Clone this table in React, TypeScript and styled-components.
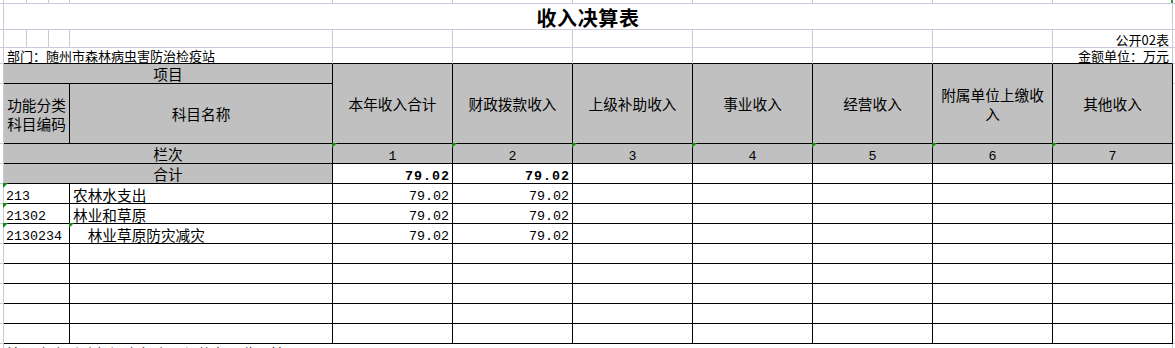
import React from "react";
import styled, { createGlobalStyle, css } from "styled-components";

const GRID = "#c9cad9";
const INK = "#000000";
const HEAD = "#c0c0c0";
const MARK = "#128a12";
const CJK = `"Noto Sans CJK SC", "Noto Sans", sans-serif`;
const MONO = `"Liberation Mono", "Noto Sans CJK SC", monospace`;

const GlobalStyle = createGlobalStyle`
  html, body { margin: 0; padding: 0; overflow: hidden; background: #ffffff; }
  body { font-family: ${CJK}; color: #000000; }
  * { box-sizing: border-box; }
`;

type Place = { $c: string; $r: string };

const Sheet = styled.div`
  display: grid;
  grid-template-columns: 4px 23px 22px 21px 263px repeat(7, 120px) 2px;
  grid-template-rows: 4px 26px 18px 16px 20px 60px repeat(10, 20px) 20px;
  width: 1175px;
  height: 348px;
  overflow: hidden;
`;

const markCss = css`
  &::before {
    content: "";
    position: absolute;
    top: -1px;
    left: -1px;
    width: 0;
    height: 0;
    border-top: 5px solid ${MARK};
    border-right: 5px solid transparent;
    z-index: 1;
  }
`;

const Base = styled.div<Place>`
  position: relative;
  grid-column: ${(p) => p.$c};
  grid-row: ${(p) => p.$r};
  display: flex;
  min-width: 0;
  white-space: nowrap;
`;

const GridCell = styled(Base)<{ $inkBottom?: boolean; $open?: boolean }>`
  border-right: ${(p) => (p.$open ? "none" : `1px solid ${GRID}`)};
  border-bottom: 1px solid ${(p) => (p.$inkBottom ? INK : GRID)};
`;

const FillHandle = styled.span`
  position: absolute;
  top: 0;
  right: -1px;
  width: 2px;
  height: 3px;
  background: #1f9d3a;
`;

const TitleCell = styled(Base)`
  border-right: 1px solid ${GRID};
  border-bottom: 1px solid ${GRID};
  justify-content: center;
  align-items: flex-end;
  font-size: 20px;
  font-weight: 700;
  line-height: 23px;
  letter-spacing: 0.6px;
`;

const InfoCell = styled(Base)<{ $right?: boolean; $inkBottom?: boolean }>`
  border-right: 1px solid ${GRID};
  border-bottom: 1px solid ${(p) => (p.$inkBottom ? INK : GRID)};
  justify-content: ${(p) => (p.$right ? "flex-end" : "flex-start")};
  align-items: flex-end;
  padding: 0 3px;
  font-size: 13px;
  line-height: 15px;
`;

const HeadCell = styled(Base)<{ $wrap?: boolean; $mark?: boolean; $mono?: boolean }>`
  background: ${HEAD};
  border-right: 1px solid ${INK};
  border-bottom: 1px solid ${INK};
  justify-content: center;
  align-items: center;
  text-align: center;
  padding: 0 2px;
  font-size: 14.67px;
  line-height: 19px;
  white-space: ${(p) => (p.$wrap ? "normal" : "nowrap")};
  ${(p) =>
    p.$mono &&
    css`
      font-family: ${MONO};
      font-size: 13.33px;
      line-height: 13px;
      align-items: flex-end;
    `}
  ${(p) => p.$mark && markCss}
`;

const BodyCell = styled(Base)<{ $mark?: boolean }>`
  background: #ffffff;
  border-right: 1px solid ${INK};
  border-bottom: 1px solid ${INK};
  align-items: flex-end;
  ${(p) => p.$mark && markCss}
`;

const CodeCell = styled(BodyCell)`
  font-family: ${MONO};
  font-size: 13.33px;
  line-height: 12px;
  padding-left: 2px;
`;

const NameCell = styled(BodyCell)<{ $indent?: number }>`
  font-size: 14.67px;
  line-height: 17px;
  padding-left: ${(p) => 3 + (p.$indent ?? 0) * 7.33}px;
`;

const AmountCell = styled(BodyCell)<{ $bold?: boolean }>`
  justify-content: flex-end;
  font-family: ${MONO};
  font-size: 13.33px;
  line-height: 12px;
  font-weight: ${(p) => (p.$bold ? 700 : 400)};
  letter-spacing: ${(p) => (p.$bold ? "1px" : "0")};
  padding-right: ${(p) => (p.$bold ? "2px" : "3px")};
`;

const NoteCell = styled(Base)`
  border-right: 1px solid ${GRID};
  align-items: flex-start;
  padding: 1px 3px 0;
  font-size: 14.67px;
  line-height: 17px;
`;

const headers = [
  "本年收入合计",
  "财政拨款收入",
  "上级补助收入",
  "事业收入",
  "经营收入",
  "附属单位上缴收入",
  "其他收入",
];

const rows = [
  { code: "213", name: "农林水支出", indent: 0, nameMark: false, total: "79.02", fiscal: "79.02" },
  { code: "21302", name: "林业和草原", indent: 0, nameMark: false, total: "79.02", fiscal: "79.02" },
  { code: "2130234", name: "林业草原防灾减灾", indent: 2, nameMark: true, total: "79.02", fiscal: "79.02" },
];

const span = (c: number) => `${c} / ${c + 1}`;
const rowOf = (r: number) => `${r} / ${r + 1}`;
const range = (a: number, b: number) => Array.from({ length: b - a + 1 }, (_, i) => a + i);

const Edges: React.FC<{ r: number }> = ({ r }) => (
  <>
    <GridCell $c={span(1)} $r={rowOf(r)} />
    <GridCell $c={span(13)} $r={rowOf(r)} $open />
  </>
);

export default function App() {
  return (
    <>
      <GlobalStyle />
      <Sheet>
        {/* partial top row */}
        {range(1, 13).map((c) => (
          <GridCell key={`t${c}`} $c={span(c)} $r={rowOf(1)} $open={c === 13}>
            {c === 12 && <FillHandle />}
          </GridCell>
        ))}

        {/* title */}
        <Edges r={2} />
        <TitleCell $c="2 / 13" $r={rowOf(2)}>收入决算表</TitleCell>

        {/* form code */}
        <Edges r={3} />
        {range(2, 11).map((c) => (
          <GridCell key={`f${c}`} $c={span(c)} $r={rowOf(3)} />
        ))}
        <InfoCell $c={span(12)} $r={rowOf(3)} $right>公开02表</InfoCell>

        {/* department / unit */}
        <Edges r={4} />
        <InfoCell $c="2 / 6" $r={rowOf(4)} $inkBottom>部门：随州市森林病虫害防治检疫站</InfoCell>
        {range(6, 11).map((c) => (
          <GridCell key={`d${c}`} $c={span(c)} $r={rowOf(4)} $inkBottom />
        ))}
        <InfoCell $c={span(12)} $r={rowOf(4)} $right $inkBottom>金额单位：万元</InfoCell>

        {/* header */}
        <Edges r={5} />
        <HeadCell $c="2 / 6" $r={rowOf(5)}>项目</HeadCell>
        {headers.map((h, i) => (
          <HeadCell key={h} $c={span(6 + i)} $r="5 / 7" $wrap>
            {h}
          </HeadCell>
        ))}
        <Edges r={6} />
        <HeadCell $c="2 / 5" $r={rowOf(6)} $wrap>功能分类科目编码</HeadCell>
        <HeadCell $c={span(5)} $r={rowOf(6)}>科目名称</HeadCell>

        {/* column numbers */}
        <Edges r={7} />
        <HeadCell $c="2 / 6" $r={rowOf(7)}>栏次</HeadCell>
        {headers.map((h, i) => (
          <HeadCell key={`n${h}`} $c={span(6 + i)} $r={rowOf(7)} $mono $mark>
            {i + 1}
          </HeadCell>
        ))}

        {/* total */}
        <Edges r={8} />
        <HeadCell $c="2 / 6" $r={rowOf(8)}>合计</HeadCell>
        <AmountCell $c={span(6)} $r={rowOf(8)} $bold>79.02</AmountCell>
        <AmountCell $c={span(7)} $r={rowOf(8)} $bold>79.02</AmountCell>
        {range(8, 12).map((c) => (
          <BodyCell key={`s${c}`} $c={span(c)} $r={rowOf(8)} />
        ))}

        {/* data rows */}
        {rows.map((row, i) => {
          const r = 9 + i;
          return (
            <React.Fragment key={row.code}>
              <Edges r={r} />
              <CodeCell $c="2 / 5" $r={rowOf(r)} $mark>{row.code}</CodeCell>
              <NameCell $c={span(5)} $r={rowOf(r)} $indent={row.indent} $mark={row.nameMark}>
                {row.name}
              </NameCell>
              <AmountCell $c={span(6)} $r={rowOf(r)}>{row.total}</AmountCell>
              <AmountCell $c={span(7)} $r={rowOf(r)}>{row.fiscal}</AmountCell>
              {range(8, 12).map((c) => (
                <BodyCell key={`b${c}`} $c={span(c)} $r={rowOf(r)} />
              ))}
            </React.Fragment>
          );
        })}

        {/* empty rows */}
        {range(12, 16).map((r) => (
          <React.Fragment key={`e${r}`}>
            <Edges r={r} />
            <BodyCell $c="2 / 5" $r={rowOf(r)} />
            <BodyCell $c={span(5)} $r={rowOf(r)} />
            {range(6, 12).map((c) => (
              <BodyCell key={`e${r}-${c}`} $c={span(c)} $r={rowOf(r)} />
            ))}
          </React.Fragment>
        ))}

        {/* note */}
        <Edges r={17} />
        <NoteCell $c="2 / 13" $r={rowOf(17)}>注：本表反映部门本年度取得的各项收入情况。</NoteCell>
      </Sheet>
    </>
  );
}
